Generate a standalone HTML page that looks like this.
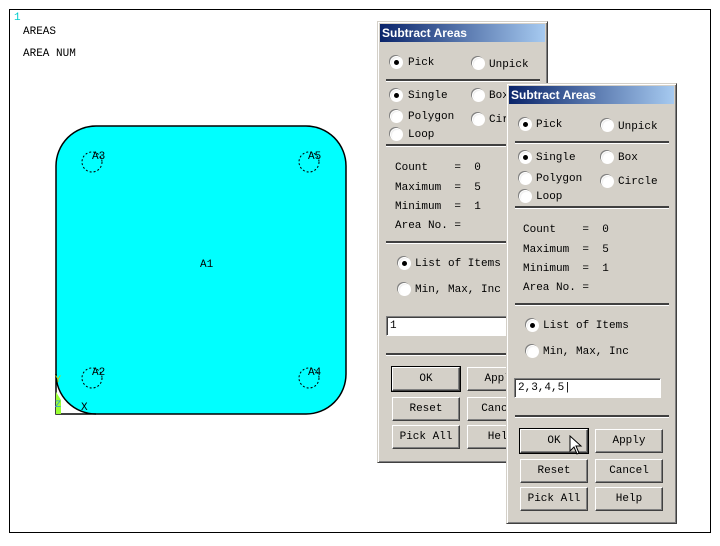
<!DOCTYPE html>
<html><head><style>
*{margin:0;padding:0;box-sizing:border-box}
body{width:720px;height:546px;background:#fff;position:relative;overflow:hidden;font-family:"Liberation Mono",monospace;font-size:11px;color:#000}
.frame{position:absolute;left:9px;top:9px;width:702px;height:524px;border:1px solid #000}
.t{position:absolute;font-family:"Liberation Mono",monospace;font-size:11px;line-height:13px;white-space:pre}
.dlg .t{margin-top:2px}
.dlg{position:absolute;width:171px;background:#d4d0c8;border:1px solid;border-color:#d4d0c8 #404040 #404040 #d4d0c8;box-shadow:inset 1px 1px #fff,inset -1px -1px #808080}
.title{position:absolute;left:2px;top:2px;right:2px;height:18px;background:linear-gradient(90deg,#0a246a,#a6caf0);color:#fff;font:bold 12px "Liberation Sans",sans-serif;padding:2px 0 0 2px}
.sep{position:absolute;left:8px;width:154px;height:3px;border-top:2px solid #404040;border-bottom:1px solid #fff}
.r{position:absolute;width:13px;height:13px;border-radius:50%;background:radial-gradient(circle at 60% 60%,#fff 55%,#e8e8e8 75%,#999 100%);border:1px solid #fff;box-shadow:-1px -1px 0 #808080}
.r.on::after{content:"";position:absolute;left:3px;top:3px;width:5px;height:5px;border-radius:50%;background:#000}
.b{position:absolute;width:68px;height:24px;border:1px solid;border-color:#fff #404040 #404040 #fff;box-shadow:inset -1px -1px #808080;text-align:center;line-height:22px}
.b.def{outline:1px solid #000}
.in{position:absolute;height:20px;background:#fff;border:1px solid;border-color:#808080 #fff #fff #808080;box-shadow:inset 1px 1px #404040;padding:3px 0 0 3px}
</style></head><body>
<div class="frame"></div>
<div class="t" style="left:14px;top:12px;color:#0cc">1</div>
<div class="t" style="left:23px;top:26px">AREAS</div>
<div class="t" style="left:23px;top:48px">AREA NUM</div>
<svg style="position:absolute;left:0;top:0" width="720" height="546">
<path d="M96 126 H306 A40 40 0 0 1 346 166 V374 A40 40 0 0 1 306 414 H96 A40 40 0 0 1 56 374 V166 A40 40 0 0 1 96 126 Z" fill="#00ffff" stroke="#000" stroke-width="1.5"/>
<path d="M56 374 V414 H96" fill="none" stroke="#000" stroke-width="1.5"/>
<g fill="none" stroke="#000" stroke-dasharray="2,2">
<circle cx="92" cy="162" r="10"/><circle cx="309" cy="162" r="10"/><circle cx="92" cy="378" r="10"/><circle cx="309" cy="378" r="10"/></g>
<g font-family="Liberation Mono" font-size="11">
<text x="92" y="159">A3</text><text x="308" y="159">A5</text><text x="200" y="267">A1</text><text x="92" y="375">A2</text><text x="308" y="375">A4</text>
<text x="81" y="410">X</text></g>
<path d="M56 392 L61 400 V414 H56Z" fill="#9f3"/>
<text x="55" y="382" font-size="10" fill="#cc0" font-family="Liberation Mono">Y</text>
<text x="55" y="407" font-size="10" fill="#39c" font-family="Liberation Mono">Z</text>
</svg>

<div class="dlg" style="left:377px;top:21px;height:442px">
<div class="title">Subtract Areas</div>
<div class="r on" style="left:12px;top:34px"></div><div class="t" style="left:30px;top:33px">Pick</div>
<div class="r" style="left:94px;top:35px"></div><div class="t" style="left:111px;top:35px">Unpick</div>
<div class="sep" style="top:57px"></div>
<div class="r on" style="left:12px;top:67px"></div><div class="t" style="left:30px;top:66px">Single</div>
<div class="r" style="left:94px;top:67px"></div><div class="t" style="left:111px;top:66px">Box</div>
<div class="r" style="left:12px;top:88px"></div><div class="t" style="left:30px;top:87px">Polygon</div>
<div class="r" style="left:94px;top:91px"></div><div class="t" style="left:111px;top:90px">Circle</div>
<div class="r" style="left:12px;top:106px"></div><div class="t" style="left:30px;top:105px">Loop</div>
<div class="sep" style="top:122px"></div>
<div class="t" style="left:17px;top:138px">Count    =  0</div>
<div class="t" style="left:17px;top:158px">Maximum  =  5</div>
<div class="t" style="left:17px;top:177px">Minimum  =  1</div>
<div class="t" style="left:17px;top:196px">Area No. =</div>
<div class="sep" style="top:219px"></div>
<div class="r on" style="left:20px;top:235px"></div><div class="t" style="left:37px;top:234px">List of Items</div>
<div class="r" style="left:20px;top:261px"></div><div class="t" style="left:37px;top:260px">Min, Max, Inc</div>
<div class="in" style="left:8px;top:294px;width:156px">1</div>
<div class="sep" style="top:331px"></div>
<div class="b def" style="left:14px;top:345px">OK</div><div class="b" style="left:89px;top:345px">Apply</div>
<div class="b" style="left:14px;top:375px">Reset</div><div class="b" style="left:89px;top:375px">Cancel</div>
<div class="b" style="left:14px;top:403px">Pick All</div><div class="b" style="left:89px;top:403px">Help</div>
</div>

<div class="dlg" style="left:506px;top:83px;height:441px">
<div class="title">Subtract Areas</div>
<div class="r on" style="left:12px;top:34px"></div><div class="t" style="left:29px;top:33px">Pick</div>
<div class="r" style="left:94px;top:35px"></div><div class="t" style="left:111px;top:35px">Unpick</div>
<div class="sep" style="top:57px"></div>
<div class="r on" style="left:12px;top:67px"></div><div class="t" style="left:29px;top:66px">Single</div>
<div class="r" style="left:94px;top:67px"></div><div class="t" style="left:111px;top:66px">Box</div>
<div class="r" style="left:12px;top:88px"></div><div class="t" style="left:29px;top:87px">Polygon</div>
<div class="r" style="left:94px;top:91px"></div><div class="t" style="left:111px;top:90px">Circle</div>
<div class="r" style="left:12px;top:106px"></div><div class="t" style="left:29px;top:105px">Loop</div>
<div class="sep" style="top:122px"></div>
<div class="t" style="left:16px;top:138px">Count    =  0</div>
<div class="t" style="left:16px;top:158px">Maximum  =  5</div>
<div class="t" style="left:16px;top:177px">Minimum  =  1</div>
<div class="t" style="left:16px;top:196px">Area No. =</div>
<div class="sep" style="top:219px"></div>
<div class="r on" style="left:19px;top:235px"></div><div class="t" style="left:36px;top:234px">List of Items</div>
<div class="r" style="left:19px;top:261px"></div><div class="t" style="left:36px;top:260px">Min, Max, Inc</div>
<div class="in" style="left:7px;top:294px;width:147px">2,3,4,5|</div>
<div class="sep" style="top:331px"></div>
<div class="b def" style="left:13px;top:345px">OK</div><div class="b" style="left:88px;top:345px">Apply</div>
<div class="b" style="left:13px;top:375px">Reset</div><div class="b" style="left:88px;top:375px">Cancel</div>
<div class="b" style="left:13px;top:403px">Pick All</div><div class="b" style="left:88px;top:403px">Help</div>
</div>
<svg style="position:absolute;left:569px;top:435px" width="14" height="22"><path d="M1 1 V16 L5 12 L8 19 L10 18 L7 11 H12 Z" fill="#fff" stroke="#000"/></svg>
</body></html>
